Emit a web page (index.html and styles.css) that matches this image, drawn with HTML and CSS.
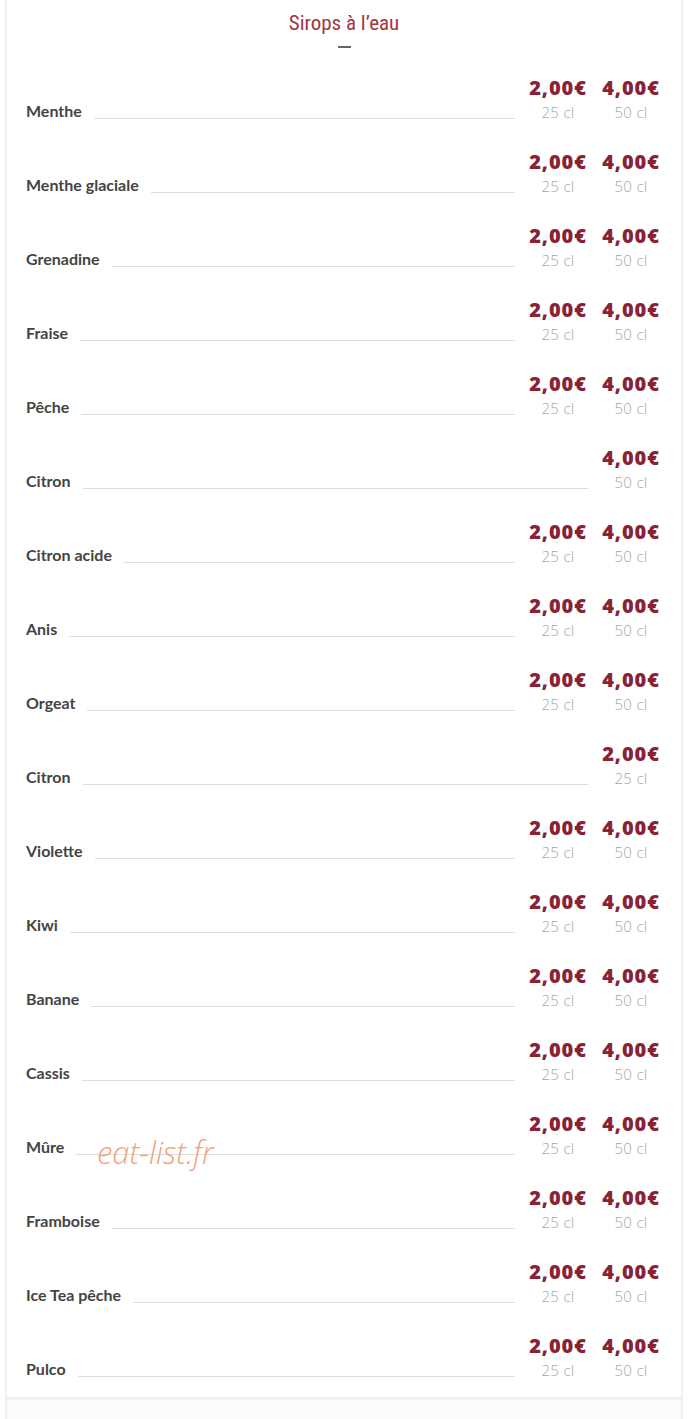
FILE: index.html
```html
<!DOCTYPE html>
<html lang="fr">
<head>
<meta charset="utf-8">
<title>Sirops à l'eau</title>
<link rel="stylesheet" href="styles.css">
</head>
<body>
<div class="card">
  <div class="header">
    <h2 class="title">Sirops à l’eau</h2>
    <div class="dash"></div>
  </div>
  <div class="rows">
    <div class="row"><span class="name">Menthe</span><span class="line"></span><div class="prices"><div class="cell"><b>2,00€</b><i>25 cl</i></div><div class="cell"><b>4,00€</b><i>50 cl</i></div></div></div>
    <div class="row"><span class="name">Menthe glaciale</span><span class="line"></span><div class="prices"><div class="cell"><b>2,00€</b><i>25 cl</i></div><div class="cell"><b>4,00€</b><i>50 cl</i></div></div></div>
    <div class="row"><span class="name">Grenadine</span><span class="line"></span><div class="prices"><div class="cell"><b>2,00€</b><i>25 cl</i></div><div class="cell"><b>4,00€</b><i>50 cl</i></div></div></div>
    <div class="row"><span class="name">Fraise</span><span class="line"></span><div class="prices"><div class="cell"><b>2,00€</b><i>25 cl</i></div><div class="cell"><b>4,00€</b><i>50 cl</i></div></div></div>
    <div class="row"><span class="name">Pêche</span><span class="line"></span><div class="prices"><div class="cell"><b>2,00€</b><i>25 cl</i></div><div class="cell"><b>4,00€</b><i>50 cl</i></div></div></div>
    <div class="row"><span class="name">Citron</span><span class="line"></span><div class="prices"><div class="cell"><b>4,00€</b><i>50 cl</i></div></div></div>
    <div class="row"><span class="name">Citron acide</span><span class="line"></span><div class="prices"><div class="cell"><b>2,00€</b><i>25 cl</i></div><div class="cell"><b>4,00€</b><i>50 cl</i></div></div></div>
    <div class="row"><span class="name">Anis</span><span class="line"></span><div class="prices"><div class="cell"><b>2,00€</b><i>25 cl</i></div><div class="cell"><b>4,00€</b><i>50 cl</i></div></div></div>
    <div class="row"><span class="name">Orgeat</span><span class="line"></span><div class="prices"><div class="cell"><b>2,00€</b><i>25 cl</i></div><div class="cell"><b>4,00€</b><i>50 cl</i></div></div></div>
    <div class="row"><span class="name">Citron</span><span class="line"></span><div class="prices"><div class="cell"><b>2,00€</b><i>25 cl</i></div></div></div>
    <div class="row"><span class="name">Violette</span><span class="line"></span><div class="prices"><div class="cell"><b>2,00€</b><i>25 cl</i></div><div class="cell"><b>4,00€</b><i>50 cl</i></div></div></div>
    <div class="row"><span class="name">Kiwi</span><span class="line"></span><div class="prices"><div class="cell"><b>2,00€</b><i>25 cl</i></div><div class="cell"><b>4,00€</b><i>50 cl</i></div></div></div>
    <div class="row"><span class="name">Banane</span><span class="line"></span><div class="prices"><div class="cell"><b>2,00€</b><i>25 cl</i></div><div class="cell"><b>4,00€</b><i>50 cl</i></div></div></div>
    <div class="row"><span class="name">Cassis</span><span class="line"></span><div class="prices"><div class="cell"><b>2,00€</b><i>25 cl</i></div><div class="cell"><b>4,00€</b><i>50 cl</i></div></div></div>
    <div class="row"><span class="name">Mûre</span><span class="line"></span><div class="prices"><div class="cell"><b>2,00€</b><i>25 cl</i></div><div class="cell"><b>4,00€</b><i>50 cl</i></div></div><span class="watermark">eat-list.fr</span></div>
    <div class="row"><span class="name">Framboise</span><span class="line"></span><div class="prices"><div class="cell"><b>2,00€</b><i>25 cl</i></div><div class="cell"><b>4,00€</b><i>50 cl</i></div></div></div>
    <div class="row"><span class="name">Ice Tea pêche</span><span class="line"></span><div class="prices"><div class="cell"><b>2,00€</b><i>25 cl</i></div><div class="cell"><b>4,00€</b><i>50 cl</i></div></div></div>
    <div class="row"><span class="name">Pulco</span><span class="line"></span><div class="prices"><div class="cell"><b>2,00€</b><i>25 cl</i></div><div class="cell"><b>4,00€</b><i>50 cl</i></div></div></div>
  </div>
</div>
<div class="next"></div>
</body>
</html>
```

FILE: styles.css
```css
html, body {
  margin: 0;
  padding: 0;
  background: #ffffff;
}
body {
  font-family: "Open Sans", "Liberation Sans", sans-serif;
  width: 693px;
  height: 1419px;
  overflow: hidden;
}
.card {
  margin-left: 5px;
  width: 678px;
  border-left: 2px solid #f0f0f0;
  border-right: 2px solid #f0f0f0;
  border-bottom: 3px solid #f0f0f0;
  padding-bottom: 5px;
  box-sizing: border-box;
}
.header {
  height: 60px;
  padding-top: 10px;
  box-sizing: border-box;
  display: flex;
  flex-direction: column;
  align-items: center;
}
.title {
  margin: 0;
  font-family: "Liberation Sans Narrow", "Roboto Condensed", "Liberation Sans", sans-serif;
  font-weight: 400;
  font-size: 21px;
  line-height: 26px;
  color: #a13546;
}
.dash {
  margin-top: 10px;
  width: 13px;
  height: 2px;
  background: #666666;
}
.rows {
  padding: 0 18px 0 19px;
}
.row {
  position: relative;
  height: 74px;
  display: flex;
  align-items: flex-end;
  padding-bottom: 12px;
  box-sizing: border-box;
}
.name {
  font-family: "Lato", "Open Sans", sans-serif;
  font-weight: 700;
  font-size: 16px;
  line-height: 20px;
  color: #444444;
  margin-bottom: 1px;
  white-space: nowrap;
}
.line {
  flex: 1;
  border-bottom: 1px solid #dddddd;
  margin: 0 11px 3px 12px;
}
.prices {
  display: flex;
  gap: 9px;
}
.cell {
  width: 64px;
  display: flex;
  flex-direction: column;
  align-items: center;
}
.cell b {
  font-family: "Open Sans", sans-serif;
  font-weight: 800;
  font-size: 20px;
  line-height: 28px;
  letter-spacing: 0.9px;
  color: #8a2236;
}
.cell i {
  font-style: normal;
  font-family: "Open Sans", sans-serif;
  font-weight: 300;
  font-size: 15px;
  line-height: 20px;
  letter-spacing: 0.3px;
  color: #a6a6a6;
}
.watermark {
  position: absolute;
  left: 71px;
  top: 39px;
  font-family: "Open Sans", sans-serif;
  font-style: italic;
  font-weight: 300;
  font-size: 31px;
  line-height: 34px;
  color: #f2a27a;
  pointer-events: none;
}
.next {
  margin-left: 5px;
  width: 678px;
  height: 30px;
  background: #fbfbfb;
  border-left: 2px solid #f0f0f0;
  border-right: 2px solid #f0f0f0;
  box-sizing: border-box;
}
```
